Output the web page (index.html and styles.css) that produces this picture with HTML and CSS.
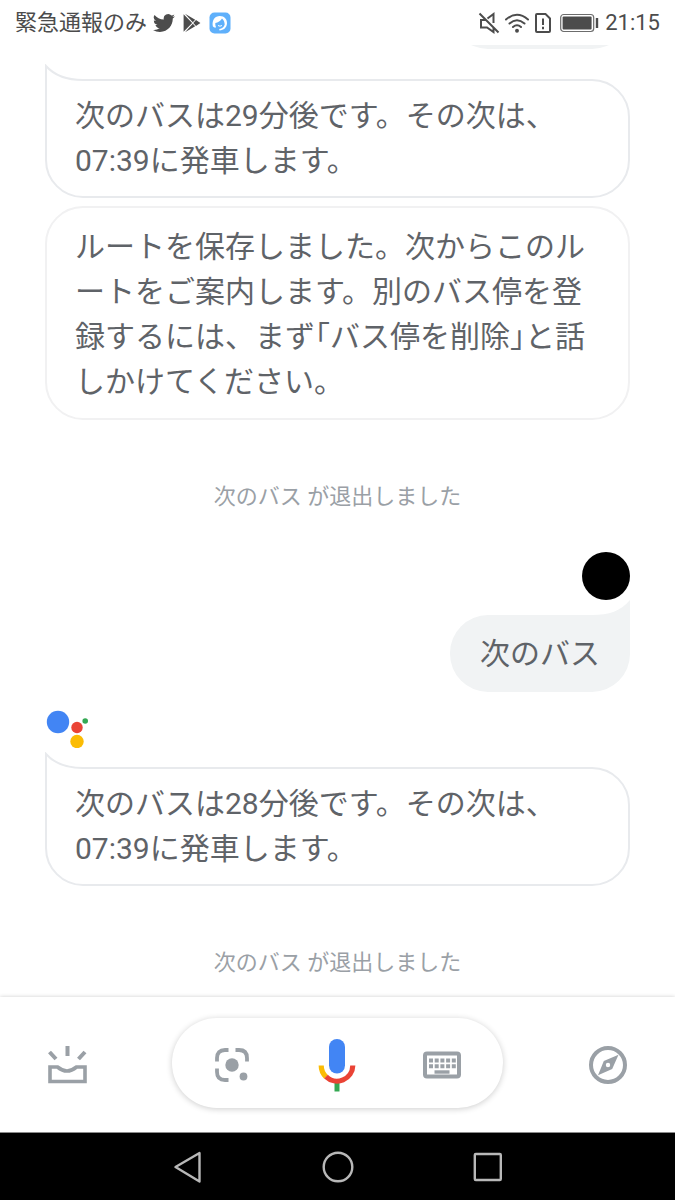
FILE: index.html
```html
<!DOCTYPE html>
<html lang="ja">
<head>
<meta charset="utf-8">
<meta name="viewport" content="width=device-width, initial-scale=1">
<title>次のバス</title>
<link rel="stylesheet" href="styles.css">
</head>
<body>
<header class="status">
  <span class="carrier">緊急通報のみ</span>
  <svg class="twitter" viewBox="0 0 24 24" width="22" height="22" aria-hidden="true"><path fill="#4c4c4c" d="M23.95 4.57a10 10 0 0 1-2.82.77 4.96 4.96 0 0 0 2.16-2.72c-.95.55-2 .96-3.13 1.18a4.92 4.92 0 0 0-8.38 4.48C7.69 8.1 4.07 6.13 1.64 3.16a4.92 4.92 0 0 0 1.52 6.57 4.9 4.9 0 0 1-2.23-.61v.06a4.92 4.92 0 0 0 3.95 4.83 5 5 0 0 1-2.21.08 4.94 4.94 0 0 0 4.6 3.42A9.87 9.87 0 0 1 0 19.54a13.99 13.99 0 0 0 7.55 2.21c9.05 0 14-7.5 14-13.98 0-.21 0-.42-.02-.63a9.94 9.94 0 0 0 2.42-2.57z"/></svg>
  <svg class="play" viewBox="0 0 18 20" width="18" height="20" aria-hidden="true"><path fill="#4c4c4c" d="M.6 1.2 9.2 10 .6 18.8zM2 .8l10.2 5.9-2.4 2.5zM2 19.2l7.8-8.4 2.4 2.5zM13 7.1l4.4 2.9-4.4 2.9L10.3 10z"/></svg>
  <svg class="app" viewBox="0 0 22 22" width="22" height="22" aria-hidden="true"><rect x=".5" y=".5" width="21" height="21" rx="5" fill="#5fb0fb"/><path d="M3.800 14.200C2.800 8 6 4 10.800 4c4.700 0 7.400 3.300 7.200 7.300-.2 4.300-3.200 7-7.500 7.200l-.3-1.500c3-.4 4.800-2 5.500-4.400-.1-2.700-1-4.700-2.700-6.100-1.500 2.600-4 4-6.700 4.500-.2 1.500.1 3 .8 4.400-1.400.2-2.600-.2-3.300-1.200z" fill="#fff"/><path d="M9 13.500q2 1.400 4 0" fill="none" stroke="#fff"/></svg>
  <span class="spacer"></span>
  <svg class="mute" viewBox="0 0 22 22" width="22" height="22" fill="none" stroke="#4c4c4c" stroke-width="2" aria-hidden="true"><path d="M1.500 1.500l19 19M9.500 6.500l6-4.500v9M15.500 15.500V20l-6.500-4.500H3V8h5"/></svg>
  <svg class="wifi" viewBox="0 0 26 22" width="26" height="22" fill="none" stroke="#4c4c4c" stroke-width="2" stroke-linecap="round" aria-hidden="true"><path d="M2 7.500q11-9.500 22 0M5.500 11.500q7.500-6.500 15 0M9 15q4-3.500 8 0"/><circle cx="13" cy="18.800" r="1.200" fill="#4c4c4c" stroke-width="1.500"/></svg>
  <svg class="sim" viewBox="0 0 16 22" width="16" height="22" fill="none" stroke="#4c4c4c" stroke-width="2" aria-hidden="true"><path d="M3 2h7.500L15 6.500V19q0 1-1 1H2q-1 0-1-1V3q0-1 1-1zM8 6.500v6.500M8 14.800v2.400"/></svg>
  <svg class="battery" viewBox="0 0 39 20" width="39" height="20" aria-hidden="true"><rect x=".7" y="1.500" width="33" height="17" rx="3" fill="none" stroke="#6c6c6c" stroke-width="1.200"/><rect x="2.600" y="3.500" width="29" height="13" rx="1" fill="#4c4c4c"/><path d="M37 5v10" stroke="#4c4c4c" stroke-width="2.400"/></svg>
  <time class="clock">21:15</time>
</header>

<main class="chat">
  <div class="bubble query earlier" aria-hidden="true"></div>

  <div class="bubble reply tailed">
    <svg class="tail" viewBox="0 0 38 17" width="38" height="17" aria-hidden="true"><path d="M2 14h36v3H2z" fill="#fff"/><path d="M1 17V2C9 11 21 16 38 16" fill="none" stroke="#e8eaed" stroke-width="2"/></svg>
    次のバスは29分後です。その次は、07:39に発車します。
  </div>
  <div class="bubble reply long">ルートを保存しました。次からこのルートをご案内します。別のバス停を登録するには、まず｢バス停を削除｣と話しかけてください。</div>

  <p class="notice">次のバス が退出しました</p>

  <div class="avatar" role="img" aria-label="ユーザー"></div>
  <div class="bubble query">
    <svg class="tail" viewBox="0 0 38 16" width="38" height="16" aria-hidden="true"><path d="M38 0V16H0V15C17 15 29 11 38 0z" fill="#f1f3f4"/></svg>
    次のバス
  </div>

  <svg class="assistant" viewBox="0 0 43 38" width="43" height="38" aria-hidden="true"><circle cx="13" cy="12" r="11.200" fill="#4285f4"/><circle cx="32" cy="17.500" r="5.700" fill="#ea4335"/><circle cx="32" cy="31.500" r="6.700" fill="#fbbc04"/><circle cx="40.200" cy="11" r="2.800" fill="#34a853"/></svg>
  <div class="bubble reply tailed">
    <svg class="tail" viewBox="0 0 38 17" width="38" height="17" aria-hidden="true"><path d="M2 14h36v3H2z" fill="#fff"/><path d="M1 17V2C9 11 21 16 38 16" fill="none" stroke="#e8eaed" stroke-width="2"/></svg>
    次のバスは28分後です。その次は、07:39に発車します。
  </div>

  <p class="notice">次のバス が退出しました</p>
</main>

<footer class="toolbar">
  <button class="tool" type="button" aria-label="アップデート">
    <svg viewBox="0 0 40 40" width="40" height="40" fill="none" stroke="#9aa0a6" stroke-width="4"><path d="M20.500 1v10M2.500 7l6.500 7M38 7l-6.500 7"/><path d="M3 22h7.500q9.500 8 19 0H38v14.500H3z" stroke-width="3.600"/></svg>
  </button>
  <div class="pill">
    <button class="tool" type="button" aria-label="レンズ">
      <svg viewBox="0 0 36 36" width="36" height="36"><path d="M3 14.500V11q0-8 8-8h3.500M21.500 3H25q8 0 8 8v3.500M3 21.500V25q0 8 8 8h3.500" fill="none" stroke="#9aa0a6" stroke-width="3.800"/><circle cx="18" cy="18" r="6.700" fill="#9aa0a6"/><circle cx="29.500" cy="29.500" r="3.900" fill="#9aa0a6"/></svg>
    </button>
    <button class="tool" type="button" aria-label="音声入力">
      <svg viewBox="0 0 38 54" width="38" height="54"><rect x="11" y="1" width="16" height="34.500" rx="8" fill="#4285f4"/><path d="M19 45v8.500" stroke="#34a853" stroke-width="5"/><path d="M3.200 27.500A15.800 15.800 0 0 0 8 38.800" fill="none" stroke="#fbbc04" stroke-width="5.200"/><path d="M8 38.600A15.800 15.800 0 0 0 34.800 27.500" fill="none" stroke="#ea4335" stroke-width="5.200"/></svg>
    </button>
    <button class="tool" type="button" aria-label="キーボード">
      <svg viewBox="0 0 38 28" width="38" height="28"><rect x="2" y="2.500" width="34" height="23" rx="2" fill="none" stroke="#9aa0a6" stroke-width="4"/><path d="M6 9.500h27M6 15.200h27" stroke="#9aa0a6" stroke-width="4" stroke-dasharray="4 1.700"/><path d="M11.500 21h15" stroke="#9aa0a6" stroke-width="3.400"/></svg>
    </button>
  </div>
  <button class="tool" type="button" aria-label="探索">
    <svg viewBox="0 0 40 40" width="40" height="40"><circle cx="20" cy="20" r="17" fill="none" stroke="#9aa0a6" stroke-width="4"/><path fill="#9aa0a6" fill-rule="evenodd" d="M30.500 9.800 24.200 24 10 30.200 15.800 16zM20 17.800a2.200 2.200 0 1 0 0 4.400 2.200 2.200 0 0 0 0-4.400z"/></svg>
  </button>
</footer>

<nav class="system">
  <button class="tool" type="button" aria-label="戻る"><svg viewBox="0 0 32 32" width="32" height="32" fill="none" stroke="#b8b8b8" stroke-width="2.400" stroke-linejoin="round"><path d="M3.500 16 27.500 2v28.500z"/></svg></button>
  <button class="tool" type="button" aria-label="ホーム"><svg viewBox="0 0 32 32" width="32" height="32" fill="none" stroke="#b8b8b8" stroke-width="2.400"><circle cx="16" cy="16" r="14.300"/></svg></button>
  <button class="tool" type="button" aria-label="最近"><svg viewBox="0 0 32 32" width="32" height="32" fill="none" stroke="#b8b8b8" stroke-width="2.400"><rect x="2.800" y="3" width="26" height="26" rx="1"/></svg></button>
</nav>
</body>
</html>
```

FILE: styles.css
```css
* {
  box-sizing: border-box;
}

body {
  margin: 0;
  height: 100vh;
  display: flex;
  flex-direction: column;
  background: #fff;
  color: #5f6368;
  font-family: Roboto, "Noto Sans CJK JP", sans-serif;
}

svg {
  display: block;
  flex: none;
}

.status {
  flex: none;
  height: 45px;
  display: flex;
  align-items: center;
  padding: 0 15px;
  color: #4c4c4c;
  font-size: 22px;
  line-height: 32px;
}

.twitter {
  margin-left: 6px;
}

.play {
  margin-left: 8px;
}

.app {
  margin-left: 8px;
}

.spacer {
  flex: 1;
}

.wifi {
  margin-left: 4px;
}

.sim {
  margin-left: 5px;
}

.battery {
  margin-left: 9px;
}

.clock {
  margin-left: 6px;
}

.chat {
  flex: 1;
  min-height: 0;
  overflow: hidden;
  display: flex;
  flex-direction: column;
  justify-content: flex-end;
  padding: 0 45px 17px;
}

.bubble {
  position: relative;
  flex: none;
  border-radius: 38px;
  font-size: 30px;
  line-height: 45px;
  line-break: loose;
}

.reply {
  padding: 12px 28px 13px;
  border: 2px solid #e8eaed;
}

.tailed {
  border-top-left-radius: 0;
}

.long {
  margin-top: 8px;
  padding-top: 16px;
  padding-bottom: 14px;
  border-color: #f1f1f2;
}

.query {
  align-self: flex-end;
  margin-top: 15px;
  padding: 16px 30px;
  border-top-right-radius: 0;
  background: #f1f3f4;
}

.earlier {
  width: 180px;
  height: 76px;
  margin: 0 0 30px;
}

.tail {
  position: absolute;
}

.reply .tail {
  top: -17px;
  left: -2px;
}

.query .tail {
  top: -15px;
  right: 0;
}

.notice {
  flex: none;
  margin: 60px 0 0;
  color: #9aa0a6;
  font-size: 22px;
  line-height: 34px;
  text-align: center;
}

.avatar {
  flex: none;
  align-self: flex-end;
  width: 48px;
  height: 48px;
  margin-top: 38px;
  border-radius: 50%;
  background: #000;
}

.assistant {
  margin: 18px 0 19px;
}

.toolbar {
  position: relative;
  flex: none;
  height: 135px;
  display: flex;
  align-items: center;
  justify-content: space-between;
  padding: 0 47px;
  background: #fff;
  box-shadow: 0 0 4px rgba(0, 0, 0, 0.2);
}

.tool {
  flex: none;
  padding: 0;
  border: 0;
  background: none;
}

.pill {
  width: 49vw;
  height: 90px;
  margin-bottom: 3px;
  display: flex;
  align-items: center;
  justify-content: space-between;
  padding: 4px 42px 0;
  border-radius: 45px;
  box-shadow: 0 1px 6px rgba(0, 0, 0, 0.2);
}

.system {
  position: relative;
  flex: none;
  height: 68px;
  display: flex;
  align-items: center;
  justify-content: center;
  gap: 118px;
  border-top: 1px solid #8a8a8a;
  background: #000;
}
```
